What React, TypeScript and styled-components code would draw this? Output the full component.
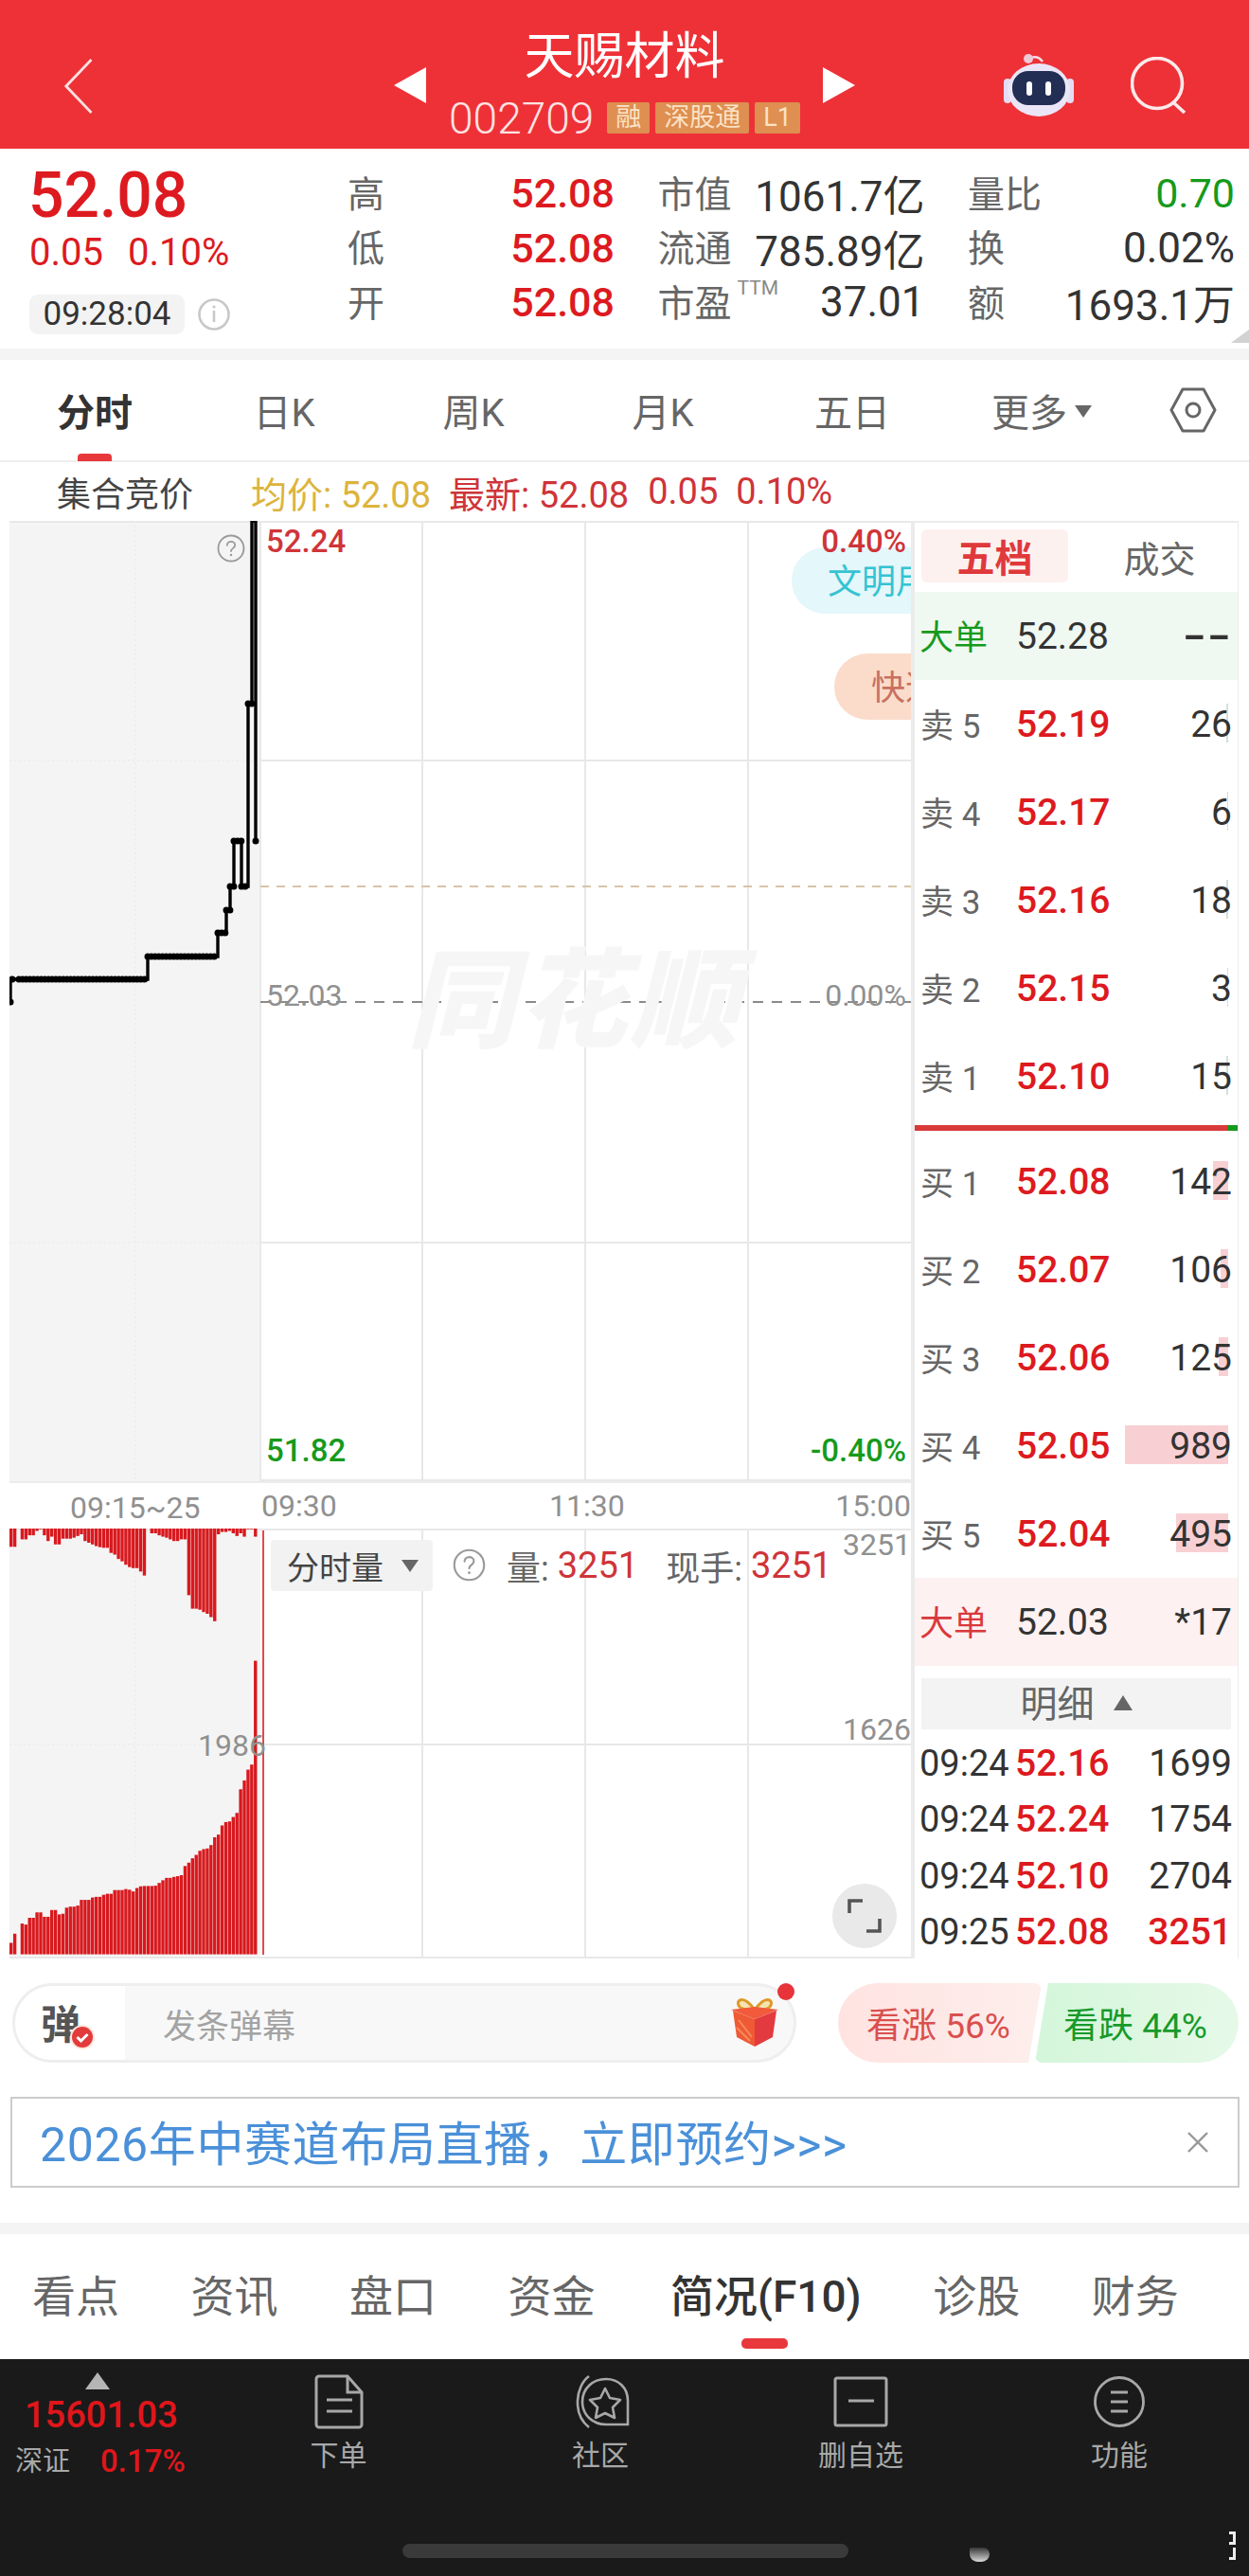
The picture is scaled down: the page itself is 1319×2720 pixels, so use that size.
import React from "react";
import styled, { createGlobalStyle } from "styled-components";

const RED = "#dd1a20";
const SOFT_RED = "#cf3439";
const GREEN = "#169a1c";
const GRID = "#e8e8e8";

const GlobalStyle = createGlobalStyle`
  html, body {
    margin: 0;
    padding: 0;
    background: #fff;
  }
  body {
    font-family: Roboto, "Noto Sans CJK SC", sans-serif;
    color: #333;
  }
  * {
    box-sizing: border-box;
  }
`;

const Page = styled.div`
  width: 1319px;
  height: 2720px;
  overflow: hidden;
  background: #fff;
  display: flex;
  flex-direction: column;
`;

/* header */
const Header = styled.header`
  height: 157px;
  flex: none;
  background: #ee3137;
  display: grid;
  grid-template-columns: 1fr auto 1fr;
  align-items: center;
  color: #fff;
`;

const BackIcon = styled.svg`
  margin-left: 66px;
  margin-top: 24px;
  display: block;
`;

const HeaderCenter = styled.div`
  display: flex;
  align-items: center;
  gap: 26px;
`;

const ArrowIcon = styled.svg`
  display: block;
  margin-top: 23px;
`;

const TitleColumn = styled.div`
  width: 367px;
  padding-top: 12px;
  display: flex;
  flex-direction: column;
  align-items: center;
`;

const Title = styled.div`
  font-size: 53px;
  line-height: 60px;
  margin-top: 2px;
`;

const CodeRow = styled.div`
  display: flex;
  align-items: center;
  gap: 6px;
  margin-top: 18px;
  height: 33px;
  white-space: nowrap;
`;

const Code = styled.span`
  font-size: 46px;
  font-weight: 300;
  margin-right: 8px;
  color: #fde3e3;
`;

const Tag = styled.span`
  flex: none;
  height: 33px;
  padding: 0 9px;
  background: #de8f51;
  color: #fbe2c6;
  font-size: 27px;
  line-height: 32px;
  border-radius: 2px;
`;

const HeaderActions = styled.div`
  display: flex;
  align-items: center;
  justify-content: flex-end;
  padding-right: 65px;
  padding-top: 22px;
  gap: 60px;
`;

/* quote summary */
const QuotePanel = styled.section`
  position: relative;
  height: 211px;
  flex: none;
  display: flex;
`;

const PriceBlock = styled.div`
  width: 367px;
  padding-left: 30px;
  display: flex;
  flex-direction: column;
`;

const BigPrice = styled.div`
  font-size: 66px;
  line-height: 70px;
  margin-top: 15px;
  font-weight: 500;
  color: ${RED};
`;

const ChangeRow = styled.div`
  display: flex;
  gap: 26px;
  font-size: 40px;
  line-height: 46px;
  margin-top: 2px;
  margin-left: 1px;
  color: ${RED};
`;

const TimeRow = styled.div`
  display: flex;
  align-items: center;
  gap: 14px;
  margin-top: 21px;
  margin-left: 1px;
`;

const TimePill = styled.div`
  width: 164px;
  height: 42px;
  background: #f3f3f3;
  border-radius: 9px;
  font-size: 35px;
  line-height: 42px;
  text-align: center;
  color: #333;
`;

const StatsGrid = styled.div`
  display: grid;
  grid-template-columns: repeat(3, 282px);
  grid-auto-rows: 57.5px;
  column-gap: 45.5px;
  padding-top: 16px;
`;

const Stat = styled.div`
  display: flex;
  align-items: center;
  justify-content: space-between;
`;

const StatLabel = styled.span`
  font-size: 39px;
  color: #666;
  display: inline-flex;
  align-items: flex-start;
`;

const Ttm = styled.sup`
  font-size: 21px;
  line-height: 30px;
  color: #888;
  margin-left: 6px;
  vertical-align: baseline;
`;

const StatValue = styled.span<{ $tone?: "red" | "green" }>`
  padding-top: 5px;
  font-size: ${({ $tone }) => ($tone ? "43px" : "44px")};
  font-weight: ${({ $tone }) => ($tone === "red" ? 500 : 400)};
  color: ${({ $tone }) => ($tone === "red" ? RED : $tone === "green" ? GREEN : "#333")};
`;

const CornerMark = styled.div`
  position: absolute;
  right: 0;
  bottom: 6px;
  width: 19px;
  height: 14px;
  background: #d2d2d2;
  clip-path: polygon(100% 0, 100% 100%, 0 100%);
`;

const Band = styled.div<{ $gap?: number }>`
  height: 12px;
  flex: none;
  margin-top: ${({ $gap }) => $gap ?? 0}px;
  background: #f4f4f4;
`;

/* period tabs */
const PeriodTabs = styled.nav`
  height: 108px;
  flex: none;
  display: flex;
  align-items: center;
  border-bottom: 2px solid #eee;
`;

const PeriodTab = styled.div<{ $active?: boolean }>`
  position: relative;
  width: 200px;
  height: 100%;
  display: flex;
  align-items: center;
  justify-content: center;
  font-size: 40px;
  font-weight: ${({ $active }) => ($active ? 700 : 400)};
  color: ${({ $active }) => ($active ? "#333" : "#666")};
`;

const TabMark = styled.i`
  position: absolute;
  left: 82px;
  bottom: -1px;
  width: 36px;
  height: 8px;
  border-radius: 4px 4px 0 0;
  background: #e8383c;
`;

const Caret = styled.b`
  display: inline-block;
  margin-left: 8px;
  margin-top: 2px;
  border-left: 9px solid transparent;
  border-right: 9px solid transparent;
  border-top: 13px solid #666;
`;

const GearIcon = styled.svg`
  display: block;
  margin-left: 35px;
`;

const AuctionRow = styled.div`
  height: 62px;
  flex: none;
  display: flex;
  align-items: center;
  padding-left: 60px;
  font-size: 38px;
`;

const AuctionName = styled.span`
  width: 205px;
  font-size: 36px;
  color: #444;
`;

const AuctionText = styled.span<{ $color: string; $gap: number }>`
  color: ${({ $color }) => $color};
  margin-right: ${({ $gap }) => $gap}px;
`;

/* chart area */
const Board = styled.section`
  height: 1518px;
  flex: none;
  display: flex;
  padding: 0 11px 0 10px;
`;

const ChartColumn = styled.div`
  width: 952px;
  display: flex;
  flex-direction: column;
`;

const PriceChart = styled.div`
  position: relative;
  height: 1014px;
  overflow: hidden;
`;

const ChartSvg = styled.svg`
  position: absolute;
  inset: 0;
  display: block;
`;

const ChartLabel = styled.span<{
  $top: number;
  $left?: number;
  $right?: number;
  $color?: string;
}>`
  position: absolute;
  top: ${({ $top }) => $top}px;
  ${({ $left }) => ($left !== undefined ? `left: ${$left}px;` : "")}
  ${({ $right }) => ($right !== undefined ? `right: ${$right}px;` : "")}
  font-size: ${({ $color }) => ($color ? "33px" : "32px")};
  line-height: 36px;
  font-weight: ${({ $color }) => ($color ? 500 : 400)};
  color: ${({ $color }) => $color ?? "#909090"};
`;

const Watermark = styled.span`
  position: absolute;
  left: 420px;
  top: 443px;
  font-size: 114px;
  line-height: 130px;
  font-weight: 900;
  font-style: italic;
  letter-spacing: 4px;
  color: #f6f6f6;
`;

const FloatPill = styled.div<{ $top: number; $left: number; $bg: string; $color: string; $pad: number }>`
  position: absolute;
  top: ${({ $top }) => $top}px;
  left: ${({ $left }) => $left}px;
  width: 240px;
  height: 70px;
  border-radius: 35px;
  background: ${({ $bg }) => $bg};
  color: ${({ $color }) => $color};
  font-size: 36px;
  line-height: 74px;
  padding-left: ${({ $pad }) => $pad}px;
  white-space: nowrap;
`;

const HelpIcon = styled.svg<{ $top: number; $left: number }>`
  position: absolute;
  top: ${({ $top }) => $top}px;
  left: ${({ $left }) => $left}px;
  display: block;
`;

const TimeAxis = styled.div`
  position: relative;
  height: 50px;
  flex: none;
  border-top: 2px solid #ececec;
`;

const VolumeChart = styled.div`
  position: relative;
  height: 454px;
  flex: none;
`;

const VolumeSelect = styled.div`
  position: absolute;
  left: 276px;
  top: 12px;
  width: 171px;
  height: 54px;
  background: #f2f2f2;
  border-radius: 4px;
  display: flex;
  align-items: center;
  padding-left: 17px;
  font-size: 34px;
  color: #444;
`;

const SelectCaret = styled.b`
  margin-left: 19px;
  border-left: 9px solid transparent;
  border-right: 9px solid transparent;
  border-top: 13px solid #666;
`;

const VolumeInfo = styled.div`
  position: absolute;
  left: 525px;
  top: 12px;
  height: 54px;
  display: flex;
  align-items: center;
  font-size: 36px;
  color: #666;
`;

const VolumeNumber = styled.span`
  font-size: 38px;
  color: ${SOFT_RED};
  margin-left: 9px;
  margin-right: 29px;
`;

const ExpandButton = styled.div`
  position: absolute;
  left: 869px;
  top: 375px;
  width: 68px;
  height: 68px;
  border-radius: 50%;
  background: #e9e9e9;
  display: flex;
  align-items: center;
  justify-content: center;
`;

/* order book */
const OrderBook = styled.aside`
  width: 346px;
  flex: none;
  border-left: 4px solid #ebebeb;
  border-right: 1px solid #ebebeb;
  border-top: 2px solid #ebebeb;
  display: flex;
  flex-direction: column;
`;

const BookTabs = styled.div`
  height: 73px;
  flex: none;
  display: flex;
  padding: 7px 0 10px 7px;
`;

const BookTab = styled.div<{ $active?: boolean }>`
  flex: ${({ $active }) => ($active ? "0 0 155px" : "1")};
  display: flex;
  align-items: center;
  justify-content: center;
  border-radius: 6px;
  padding-left: ${({ $active }) => ($active ? "0" : "14px")};
  font-size: ${({ $active }) => ($active ? "40px" : "38px")};
  font-weight: ${({ $active }) => ($active ? 700 : 400)};
  color: ${({ $active }) => ($active ? "#e0393b" : "#666")};
  background: ${({ $active }) => ($active ? "#fdf1f0" : "transparent")};
`;

const BookRow = styled.div<{ $tint?: string }>`
  position: relative;
  height: 93px;
  flex: none;
  display: grid;
  grid-template-columns: 100px 1fr auto;
  align-items: center;
  padding: 0 6px 0 7px;
  background: ${({ $tint }) => $tint ?? "transparent"};
`;

const RowLabel = styled.span<{ $color?: string; $big?: boolean }>`
  font-size: ${({ $big }) => ($big ? "36px" : "35px")};
  margin-left: ${({ $big }) => ($big ? "-2px" : "-1px")};
  margin-top: -3px;
  color: ${({ $color }) => $color ?? "#666"};
  white-space: pre;
`;

const RowPrice = styled.span<{ $plain?: boolean }>`
  position: relative;
  font-size: 39px;
  font-weight: ${({ $plain }) => ($plain ? 400 : 500)};
  color: ${({ $plain }) => ($plain ? "#333" : RED)};
`;

const RowQty = styled.span<{ $stretch?: boolean }>`
  position: relative;
  font-size: 39px;
  color: #333;
  ${({ $stretch }) =>
    $stretch ? "font-weight: 700; transform: scaleX(1.7); transform-origin: right center;" : ""}
`;

const DepthBar = styled.i<{ $buy?: boolean }>`
  position: absolute;
  right: 10px;
  top: 25px;
  height: 41px;
  background: ${({ $buy }) => ($buy ? "#f8d0d3" : "#d5e0d8")};
`;

const SplitBar = styled.div`
  height: 6px;
  flex: none;
  margin: 5px 0 7px;
  background: #d93a3a;
  display: flex;
  justify-content: flex-end;
`;

const SplitGreen = styled.i`
  width: 11px;
  background: ${GREEN};
`;

const DetailHead = styled.div`
  height: 54px;
  flex: none;
  margin: 13px 7px 6px 7px;
  padding-bottom: 6px;
  background: #f3f3f3;
  display: flex;
  align-items: center;
  justify-content: center;
  gap: 20px;
  font-size: 39px;
  color: #666;
`;

const UpCaret = styled.b`
  margin-top: 4px;
  border-left: 10px solid transparent;
  border-right: 10px solid transparent;
  border-bottom: 16px solid #666;
`;

const TickRow = styled.div`
  height: 59.5px;
  flex: none;
  display: grid;
  grid-template-columns: 101px 1fr auto;
  align-items: center;
  padding: 0 6px 0 5px;
  font-size: 39px;
`;

const TickTime = styled.span`
  font-size: 38px;
  color: #333;
`;

const TickQty = styled.span<{ $hot?: boolean }>`
  color: ${({ $hot }) => ($hot ? RED : "#333")};
  font-weight: ${({ $hot }) => ($hot ? 500 : 400)};
`;

/* comment bar */
const CommentBar = styled.div`
  height: 84px;
  flex: none;
  margin: 26px 11px 0 13px;
  display: flex;
  justify-content: space-between;
`;

const CommentInput = styled.div`
  position: relative;
  width: 828px;
  border: 3px solid #eee;
  border-radius: 42px;
  background: #f8f8f8;
  display: flex;
  align-items: center;
  font-size: 35px;
  color: #a3a3a3;
`;

const DanmuTile = styled.div`
  position: relative;
  width: 116px;
  height: 100%;
  margin-right: 40px;
  background: #fff;
  border-radius: 40px 0 0 40px;
  display: flex;
  align-items: center;
  padding-left: 27px;
  padding-bottom: 4px;
  font-size: 42px;
  font-weight: 700;
  color: #555;
`;

const CheckBadge = styled.svg`
  position: absolute;
  left: 58px;
  top: 41px;
  display: block;
`;

const GiftIcon = styled.svg`
  position: absolute;
  left: 756px;
  top: 12px;
  display: block;
`;

const RedDot = styled.i`
  position: absolute;
  right: -1px;
  top: -3px;
  width: 18px;
  height: 18px;
  border-radius: 50%;
  background: #e8333a;
`;

const VoteGroup = styled.div`
  width: 423px;
  display: flex;
`;

const VoteButton = styled.div<{ $up?: boolean }>`
  flex: 0 0 215px;
  margin-left: ${({ $up }) => ($up ? "0" : "-7px")};
  display: flex;
  align-items: center;
  font-size: 37px;
  padding-left: 30px;
  color: ${({ $up }) => ($up ? "#d9504f" : "#169a2a")};
  background: ${({ $up }) =>
    $up ? "linear-gradient(90deg, #ffe3e1, #fdeeec)" : "linear-gradient(90deg, #d4f6da, #e6f9e8)"};
  border-radius: ${({ $up }) => ($up ? "42px 8px 8px 42px" : "8px 42px 42px 8px")};
  clip-path: ${({ $up }) =>
    $up
      ? "polygon(0 0, 100% 0, calc(100% - 14px) 100%, 0 100%)"
      : "polygon(14px 0, 100% 0, 100% 100%, 0 100%)"};
`;

/* banner */
const Banner = styled.div`
  height: 96px;
  flex: none;
  margin: 36px 10px 0 11px;
  border: 2px solid #ccc;
  display: flex;
  align-items: center;
  justify-content: space-between;
  padding: 0 30px 4px 29px;
  font-size: 50px;
  letter-spacing: 0.6px;
  color: #4a90d9;
`;

const CloseIcon = styled.svg`
  display: block;
  margin-top: 4px;
`;

/* f10 tabs */
const InfoTabs = styled.nav`
  height: 132px;
  flex: none;
  display: flex;
  align-items: center;
  gap: 75.5px;
  padding: 0 0 8px 34px;
  font-size: 46px;
  color: #666;
`;

const InfoTab = styled.span<{ $active?: boolean }>`
  position: relative;
  margin-left: ${({ $active }) => ($active ? "4px" : "0")};
  font-weight: ${({ $active }) => ($active ? 500 : 400)};
  color: ${({ $active }) => ($active ? "#333" : "#666")};
`;

const InfoMark = styled.i`
  position: absolute;
  left: 75px;
  bottom: -26px;
  width: 49px;
  height: 11px;
  border-radius: 5px;
  background: #e8383c;
`;

/* bottom bar */
const BottomBar = styled.footer`
  position: relative;
  flex: 1;
  background: #1a1a1a;
  display: grid;
  grid-template-columns: 220px 275px 278px 272px 274px;
  align-items: start;
  color: #a8a8a8;
`;

const IndexBlock = styled.div`
  position: relative;
  padding: 14px 0 0 16px;
`;

const IndexTriangle = styled.i`
  display: block;
  width: 0;
  margin-left: 74px;
  border-left: 13px solid transparent;
  border-right: 13px solid transparent;
  border-bottom: 18px solid #b5b5b5;
`;

const IndexValue = styled.div`
  font-size: 38px;
  line-height: 46px;
  font-weight: 500;
  margin: 4px 0 0 10px;
  color: #e0161b;
`;

const IndexRow = styled.div`
  display: flex;
  align-items: center;
  gap: 32px;
  margin-top: 2px;
  font-size: 29px;
  line-height: 48px;
`;

const IndexChange = styled.span`
  font-size: 33px;
  font-weight: 500;
  color: #e0161b;
`;

const NavItem = styled.div`
  display: flex;
  flex-direction: column;
  align-items: center;
  padding-top: 16px;
  font-size: 30px;
  line-height: 40px;
`;

const NavIcon = styled.svg<{ $inset?: boolean }>`
  display: block;
  margin-top: ${({ $inset }) => ($inset ? "2px" : "0")};
  margin-bottom: ${({ $inset }) => ($inset ? "10px" : "8px")};
`;

const HomeIndicator = styled.i`
  position: absolute;
  left: 425px;
  top: 195px;
  width: 471px;
  height: 15px;
  border-radius: 8px;
  background: #3a3a3a;
`;

const CornerGlint = styled.i`
  position: absolute;
  left: 1024px;
  top: 199px;
  width: 21px;
  height: 15px;
  border-radius: 2px 10px 12px 12px;
  background: linear-gradient(180deg, rgba(220, 220, 220, 0.15), #d8d8d8);
`;

const EdgeGlint = styled.i<{ $top: number; $h: number; $open?: boolean }>`
  position: absolute;
  left: 1298px;
  top: ${({ $top }) => $top}px;
  width: 7px;
  height: ${({ $h }) => $h}px;
  border-right: 3px solid #eee;
  border-bottom: 3px solid #eee;
  border-top: ${({ $open }) => ($open ? "none" : "3px solid #eee")};
`;

/* chart data: vertical sizes follow the screenshot */
const volumeTops = [
  1432, 1405, 1466, 1375, 1378, 1358, 1358, 1342, 1342, 1355, 1355, 1335, 1335, 1348, 1346, 1328, 1325,
  1325, 1322, 1305, 1305, 1305, 1298, 1296, 1296, 1290, 1287, 1287, 1276, 1276, 1276, 1273, 1275, 1280,
  1270, 1265, 1264, 1264, 1264, 1263, 1255, 1247, 1240, 1240, 1237, 1235, 1232, 1205, 1195, 1182, 1172,
  1160, 1155, 1153, 1143, 1120, 1112, 1085, 1075, 1073, 1060, 1048, 978, 952, 920, 905, 598,
];

const volumeDrops = [
  262, 262, 208, 240, 240, 228, 228, 215, 210, 228, 245, 232, 255, 255, 238, 238, 238, 235, 230, 225, 245,
  250, 255, 260, 263, 265, 265, 280, 285, 298, 305, 315, 322, 325, 325, 335, 347, 208, 222, 222, 228, 232,
  235, 240, 245, 245, 240, 240, 405, 445, 445, 448, 455, 460, 470, 482, 225, 218, 218, 215, 222, 230, 222,
  232, 210, 210, 232,
];

const sellRows = [
  { label: "卖 5", price: "52.19", qty: "26", depth: 2 },
  { label: "卖 4", price: "52.17", qty: "6", depth: 1 },
  { label: "卖 3", price: "52.16", qty: "18", depth: 2 },
  { label: "卖 2", price: "52.15", qty: "3", depth: 1 },
  { label: "卖 1", price: "52.10", qty: "15", depth: 2 },
];

const buyRows = [
  { label: "买 1", price: "52.08", qty: "142", depth: 16 },
  { label: "买 2", price: "52.07", qty: "106", depth: 8 },
  { label: "买 3", price: "52.06", qty: "125", depth: 10 },
  { label: "买 4", price: "52.05", qty: "989", depth: 109 },
  { label: "买 5", price: "52.04", qty: "495", depth: 55 },
];

const ticks = [
  { time: "09:24", price: "52.16", qty: "1699" },
  { time: "09:24", price: "52.24", qty: "1754" },
  { time: "09:24", price: "52.10", qty: "2704" },
  { time: "09:25", price: "52.08", qty: "3251", hot: true },
];

const Help = ({ size, top, left }: { size: number; top: number; left: number }) => (
  <HelpIcon $top={top} $left={left} width={size} height={size} viewBox="0 0 30 30" fill="none">
    <circle cx="15" cy="15" r="13.5" stroke="#9a9a9a" strokeWidth="1.8" />
    <path
      d="M10.8 11.8c0-2.4 1.9-4 4.2-4s4.2 1.5 4.2 3.7c0 3.4-4.2 3.4-4.2 6.6"
      stroke="#9a9a9a"
      strokeWidth="1.8"
      strokeLinecap="round"
    />
    <circle cx="15" cy="22" r="1.2" fill="#9a9a9a" />
  </HelpIcon>
);

const PriceChartDrawing = () => (
  <ChartSvg width="952" height="1014" viewBox="10 550 952 1014">
    <rect x="10" y="550" width="265" height="1014" fill="#f4f4f4" />
    <path d="M10 551H962M275 803H962M275 1312H962M275 1563H962" stroke={GRID} strokeWidth="2" />
    <path d="M275 550V1564M446 550V1564M618 550V1564M790 550V1564" stroke={GRID} strokeWidth="2" />
    <path d="M10 803H275M10 1312H275M143 550V1564" stroke="#ececec" strokeWidth="1.5" strokeDasharray="2 3" />
    <path d="M275 936H962" stroke="#d8c4a6" strokeWidth="2" strokeDasharray="9 8" />
    <path d="M275 1058H962" stroke="#8a8a8a" strokeWidth="2" strokeDasharray="11 9" />
    <path
      d="M11 1058V1034H156V1010H230V985H239V961H243V936H247V888H255V936H262V743H266V550H270V888"
      fill="none"
      stroke="#000"
      strokeWidth="3.4"
    />
    <path
      d="M20 1034H156M156 1010H230M230 985H239M239 961H243M243 936H247M247 888H255M255 936H262M262 743H266M270 888H270.1M13 1034H15M11 1058H11.1"
      fill="none"
      stroke="#000"
      strokeWidth="7"
      strokeLinecap="round"
      strokeDasharray="0 3.9"
    />
  </ChartSvg>
);

const VolumeDrawing = () => (
  <ChartSvg width="952" height="454" viewBox="10 1614 952 454">
    <rect x="10" y="1614" width="265" height="454" fill="#f4f4f4" />
    <path d="M10 1615H962M275 1842H962M10 2067H962" stroke={GRID} strokeWidth="2" />
    <path d="M446 1614V2068M618 1614V2068M790 1614V2068" stroke={GRID} strokeWidth="2" />
    <path d="M10 1842H275M143 1614V2068" stroke="#ececec" strokeWidth="1.5" strokeDasharray="2 3" />
    {volumeDrops.map((drop, i) => (
      <rect key={`d${i}`} x={10 + i * 3.91} y="1614" width="3.4" height={drop / 2.8 - 74.3} fill="#d8191e" />
    ))}
    {volumeTops.map((top, i) => (
      <rect key={`t${i}`} x={10 + i * 3.91} y={1540 + top / 2.8} width="3.4" height={(1466 - top) / 2.8} fill="#d8191e" />
    ))}
    <rect x="277" y="1616" width="2" height="448" fill="#e5474b" />
  </ChartSvg>
);

export default function App() {
  return (
    <Page>
      <GlobalStyle />
      <Header>
        <BackIcon width="34" height="60" viewBox="0 0 34 60" fill="none">
          <path d="M31 2 3 30l28 28" stroke="#fff" strokeOpacity=".85" strokeWidth="3" transform="matrix(.95 0 0 1 1 0)" />
        </BackIcon>
        <HeaderCenter>
          <ArrowIcon width="34" height="38" viewBox="0 0 34 38">
            <path d="M34 0v38L0 19z" fill="#fff" />
          </ArrowIcon>
          <TitleColumn>
            <Title>天赐材料</Title>
            <CodeRow>
              <Code>002709</Code>
              <Tag>融</Tag>
              <Tag>深股通</Tag>
              <Tag>L1</Tag>
            </CodeRow>
          </TitleColumn>
          <ArrowIcon width="34" height="38" viewBox="0 0 34 38">
            <path d="M0 0v38l34-19z" fill="#fff" />
          </ArrowIcon>
        </HeaderCenter>
        <HeaderActions>
          <svg width="74" height="68" viewBox="0 0 74 68">
            <path d="M28 10C26 3 36 2 41 9" fill="none" stroke="#f3dce6" strokeWidth="2.5" />
            <circle cx="26" cy="6" r="5" fill="#f0c9d8" />
            <rect x="0" y="27" width="8" height="26" rx="4" fill="#e4dcf4" />
            <rect x="66" y="27" width="8" height="26" rx="4" fill="#e4dcf4" />
            <ellipse cx="37" cy="39" rx="33" ry="28" fill="#ebe6f7" />
            <rect x="9" y="19" width="56" height="36" rx="17" fill="#232e55" />
            <rect x="24" y="30" width="6" height="15" rx="3" fill="#fff" />
            <rect x="44" y="30" width="6" height="15" rx="3" fill="#fff" />
          </svg>
          <svg width="60" height="60" viewBox="0 0 60 60" fill="none">
            <circle cx="28" cy="28" r="26.5" stroke="#fff" strokeOpacity=".9" strokeWidth="3.6" />
            <path d="M46 49l11 10" stroke="#fff" strokeOpacity=".9" strokeWidth="3.6" />
          </svg>
        </HeaderActions>
      </Header>

      <QuotePanel>
        <PriceBlock>
          <BigPrice>52.08</BigPrice>
          <ChangeRow>
            <span>0.05</span>
            <span>0.10%</span>
          </ChangeRow>
          <TimeRow>
            <TimePill>09:28:04</TimePill>
            <svg width="34" height="34" viewBox="0 0 34 34" fill="none">
              <circle cx="17" cy="17" r="15.5" stroke="#c8c8c8" strokeWidth="2.6" />
              <path d="M17 13v12" stroke="#c8c8c8" strokeWidth="2.6" />
              <circle cx="17" cy="9" r="1.6" fill="#c8c8c8" />
            </svg>
          </TimeRow>
        </PriceBlock>
        <StatsGrid>
          <Stat>
            <StatLabel>高</StatLabel>
            <StatValue $tone="red">52.08</StatValue>
          </Stat>
          <Stat>
            <StatLabel>市值</StatLabel>
            <StatValue>1061.7亿</StatValue>
          </Stat>
          <Stat>
            <StatLabel>量比</StatLabel>
            <StatValue $tone="green">0.70</StatValue>
          </Stat>
          <Stat>
            <StatLabel>低</StatLabel>
            <StatValue $tone="red">52.08</StatValue>
          </Stat>
          <Stat>
            <StatLabel>流通</StatLabel>
            <StatValue>785.89亿</StatValue>
          </Stat>
          <Stat>
            <StatLabel>换</StatLabel>
            <StatValue>0.02%</StatValue>
          </Stat>
          <Stat>
            <StatLabel>开</StatLabel>
            <StatValue $tone="red">52.08</StatValue>
          </Stat>
          <Stat>
            <StatLabel>
              市盈<Ttm>TTM</Ttm>
            </StatLabel>
            <StatValue>37.01</StatValue>
          </Stat>
          <Stat>
            <StatLabel>额</StatLabel>
            <StatValue>1693.1万</StatValue>
          </Stat>
        </StatsGrid>
        <CornerMark />
      </QuotePanel>
      <Band />

      <PeriodTabs>
        <PeriodTab $active>
          分时
          <TabMark />
        </PeriodTab>
        <PeriodTab>日K</PeriodTab>
        <PeriodTab>周K</PeriodTab>
        <PeriodTab>月K</PeriodTab>
        <PeriodTab>五日</PeriodTab>
        <PeriodTab>
          更多
          <Caret />
        </PeriodTab>
        <GearIcon width="50" height="48" viewBox="0 0 50 48" fill="none">
          <path d="M14 2h22l12 22-12 22H14L2 24z" stroke="#666" strokeWidth="3" strokeLinejoin="round" />
          <circle cx="25" cy="24" r="7" stroke="#666" strokeWidth="3" />
        </GearIcon>
      </PeriodTabs>

      <AuctionRow>
        <AuctionName>集合竞价</AuctionName>
        <AuctionText $color="#dcb43c" $gap={19}>均价: 52.08</AuctionText>
        <AuctionText $color={SOFT_RED} $gap={20}>最新: 52.08</AuctionText>
        <AuctionText $color={SOFT_RED} $gap={19}>0.05</AuctionText>
        <AuctionText $color={SOFT_RED} $gap={0}>0.10%</AuctionText>
      </AuctionRow>

      <Board>
        <ChartColumn>
          <PriceChart>
            <PriceChartDrawing />
            <Watermark>同花顺</Watermark>
            <Help size={30} top={14} left={219} />
            <ChartLabel $top={4} $left={271} $color={SOFT_RED}>52.24</ChartLabel>
            <ChartLabel $top={483} $left={271}>52.03</ChartLabel>
            <ChartLabel $top={964} $left={271} $color={GREEN}>51.82</ChartLabel>
            <FloatPill $top={28} $left={826} $bg="#e4f7fa" $color="#35c3d3" $pad={38}>文明用语</FloatPill>
            <FloatPill $top={140} $left={871} $bg="#fbdccb" $color="#c9705f" $pad={39}>快速</FloatPill>
            <ChartLabel $top={4} $right={5} $color={SOFT_RED}>0.40%</ChartLabel>
            <ChartLabel $top={483} $right={5}>0.00%</ChartLabel>
            <ChartLabel $top={964} $right={5} $color={GREEN}>-0.40%</ChartLabel>
          </PriceChart>
          <TimeAxis>
            <ChartLabel $top={8} $left={64}>09:15~25</ChartLabel>
            <ChartLabel $top={6} $left={266}>09:30</ChartLabel>
            <ChartLabel $top={6} $left={570}>11:30</ChartLabel>
            <ChartLabel $top={6} $right={0}>15:00</ChartLabel>
          </TimeAxis>
          <VolumeChart>
            <VolumeDrawing />
            <ChartLabel $top={-1} $right={0}>3251</ChartLabel>
            <ChartLabel $top={194} $right={0}>1626</ChartLabel>
            <ChartLabel $top={211} $left={199}>1986</ChartLabel>
            <VolumeSelect>
              分时量
              <SelectCaret />
            </VolumeSelect>
            <Help size={35} top={21} left={468} />
            <VolumeInfo>
              量:
              <VolumeNumber>3251</VolumeNumber>
              现手:
              <VolumeNumber>3251</VolumeNumber>
            </VolumeInfo>
            <ExpandButton>
              <svg width="36" height="36" viewBox="0 0 36 36" fill="none">
                <path d="M2 15V2h14M34 21v13H20" stroke="#555" strokeWidth="3.6" />
              </svg>
            </ExpandButton>
          </VolumeChart>
        </ChartColumn>

        <OrderBook>
          <BookTabs>
            <BookTab $active>五档</BookTab>
            <BookTab>成交</BookTab>
          </BookTabs>
          <BookRow $tint="#f0f8f2">
            <RowLabel $big $color={GREEN}>大单</RowLabel>
            <RowPrice $plain>52.28</RowPrice>
            <RowQty $stretch>--</RowQty>
          </BookRow>
          {sellRows.map((row) => (
            <BookRow key={row.label}>
              <DepthBar style={{ width: row.depth }} />
              <RowLabel>{row.label}</RowLabel>
              <RowPrice>{row.price}</RowPrice>
              <RowQty>{row.qty}</RowQty>
            </BookRow>
          ))}
          <SplitBar>
            <SplitGreen />
          </SplitBar>
          {buyRows.map((row) => (
            <BookRow key={row.label}>
              <DepthBar $buy style={{ width: row.depth }} />
              <RowLabel>{row.label}</RowLabel>
              <RowPrice>{row.price}</RowPrice>
              <RowQty>{row.qty}</RowQty>
            </BookRow>
          ))}
          <BookRow $tint="#fdf1f1">
            <RowLabel $big $color="#d9393c">大单</RowLabel>
            <RowPrice $plain>52.03</RowPrice>
            <RowQty>*17</RowQty>
          </BookRow>
          <DetailHead>
            明细
            <UpCaret />
          </DetailHead>
          {ticks.map((tick) => (
            <TickRow key={tick.qty}>
              <TickTime>{tick.time}</TickTime>
              <RowPrice>{tick.price}</RowPrice>
              <TickQty $hot={tick.hot}>{tick.qty}</TickQty>
            </TickRow>
          ))}
        </OrderBook>
      </Board>

      <CommentBar>
        <CommentInput>
          <DanmuTile>
            弹
            <CheckBadge width="26" height="26" viewBox="0 0 26 26" fill="none">
              <circle cx="13" cy="13" r="12" fill="#e23b3b" stroke="#fbe6dc" strokeWidth="2" />
              <path d="M7.5 13l4 4 7-7" stroke="#fff" strokeWidth="3" />
            </CheckBadge>
          </DanmuTile>
          发条弹幕
          <GiftIcon width="50" height="52" viewBox="0 0 50 52">
            <path d="M24 12C12 -4 4 4 9 10c3 3 10 3 15 2zM26 12C38 -4 46 4 41 10c-3 3-10 3-15 2z" fill="#f6e3b0" stroke="#dd9a2a" strokeWidth="3" />
            <path d="M0 13 25 10l25 3-25 10z" fill="#f25a3c" />
            <path d="M2 14l23 9v29L6 42z" fill="#ee5a35" />
            <path d="M48 14 25 23v29l19-10z" fill="#e23a3e" />
            <path d="M8 24l14 18M6 32l14 14" stroke="#f88a5a" strokeWidth="2" />
          </GiftIcon>
          <RedDot />
        </CommentInput>
        <VoteGroup>
          <VoteButton $up>看涨 56%</VoteButton>
          <VoteButton>看跌 44%</VoteButton>
        </VoteGroup>
      </CommentBar>

      <Banner>
        <span>2026年中赛道布局直播，立即预约&gt;&gt;&gt;</span>
        <CloseIcon width="24" height="24" viewBox="0 0 24 24" fill="none">
          <path d="M2 2l20 20M22 2 2 22" stroke="#999" strokeWidth="2.4" />
        </CloseIcon>
      </Banner>

      <Band $gap={37} />

      <InfoTabs>
        <InfoTab>看点</InfoTab>
        <InfoTab>资讯</InfoTab>
        <InfoTab>盘口</InfoTab>
        <InfoTab>资金</InfoTab>
        <InfoTab $active>
          简况(F10)
          <InfoMark />
        </InfoTab>
        <InfoTab>诊股</InfoTab>
        <InfoTab>财务</InfoTab>
      </InfoTabs>

      <BottomBar>
        <IndexBlock>
          <IndexTriangle />
          <IndexValue>15601.03</IndexValue>
          <IndexRow>
            深证
            <IndexChange>0.17%</IndexChange>
          </IndexRow>
        </IndexBlock>
        <NavItem>
          <NavIcon width="52" height="58" viewBox="0 0 52 58" fill="none">
            <path d="M5 2h30l15 17v34a3 3 0 0 1-3 3H5a3 3 0 0 1-3-3V5a3 3 0 0 1 3-3z" stroke="#a8a8a8" strokeWidth="3" />
            <path d="M35 2v17h15M13 27h27M13 39h27" stroke="#a8a8a8" strokeWidth="3" />
          </NavIcon>
          下单
        </NavItem>
        <NavItem>
          <NavIcon width="62" height="58" viewBox="0 0 62 58" fill="none">
            <path d="M19 2C5 12 1 42 19 56" stroke="#a8a8a8" strokeWidth="2.6" />
            <path d="M60 52V28C60 14 50 5 37 5 23 5 12 15 12 29s11 24 25 24h23z" stroke="#a8a8a8" strokeWidth="2.6" />
            <path d="M36 15l5 10 11 2-8 8 2 11-10-5-10 5 2-11-8-8 11-2z" stroke="#a8a8a8" strokeWidth="2.6" strokeLinejoin="round" />
          </NavIcon>
          社区
        </NavItem>
        <NavItem>
          <NavIcon $inset width="58" height="54" viewBox="0 0 58 54" fill="none">
            <rect x="2" y="2" width="54" height="50" rx="2" stroke="#a8a8a8" strokeWidth="3" />
            <path d="M16 26h27" stroke="#a8a8a8" strokeWidth="3" />
          </NavIcon>
          删自选
        </NavItem>
        <NavItem>
          <NavIcon $inset width="54" height="54" viewBox="0 0 54 54" fill="none">
            <circle cx="27" cy="27" r="25.5" stroke="#a8a8a8" strokeWidth="2.8" />
            <path d="M18 17h18M18 27h18M18 37h18" stroke="#a8a8a8" strokeWidth="3" />
          </NavIcon>
          功能
        </NavItem>
        <HomeIndicator />
        <CornerGlint />
        <EdgeGlint $top={182} $h={14} />
        <EdgeGlint $top={199} $h={13} $open />
      </BottomBar>
    </Page>
  );
}
